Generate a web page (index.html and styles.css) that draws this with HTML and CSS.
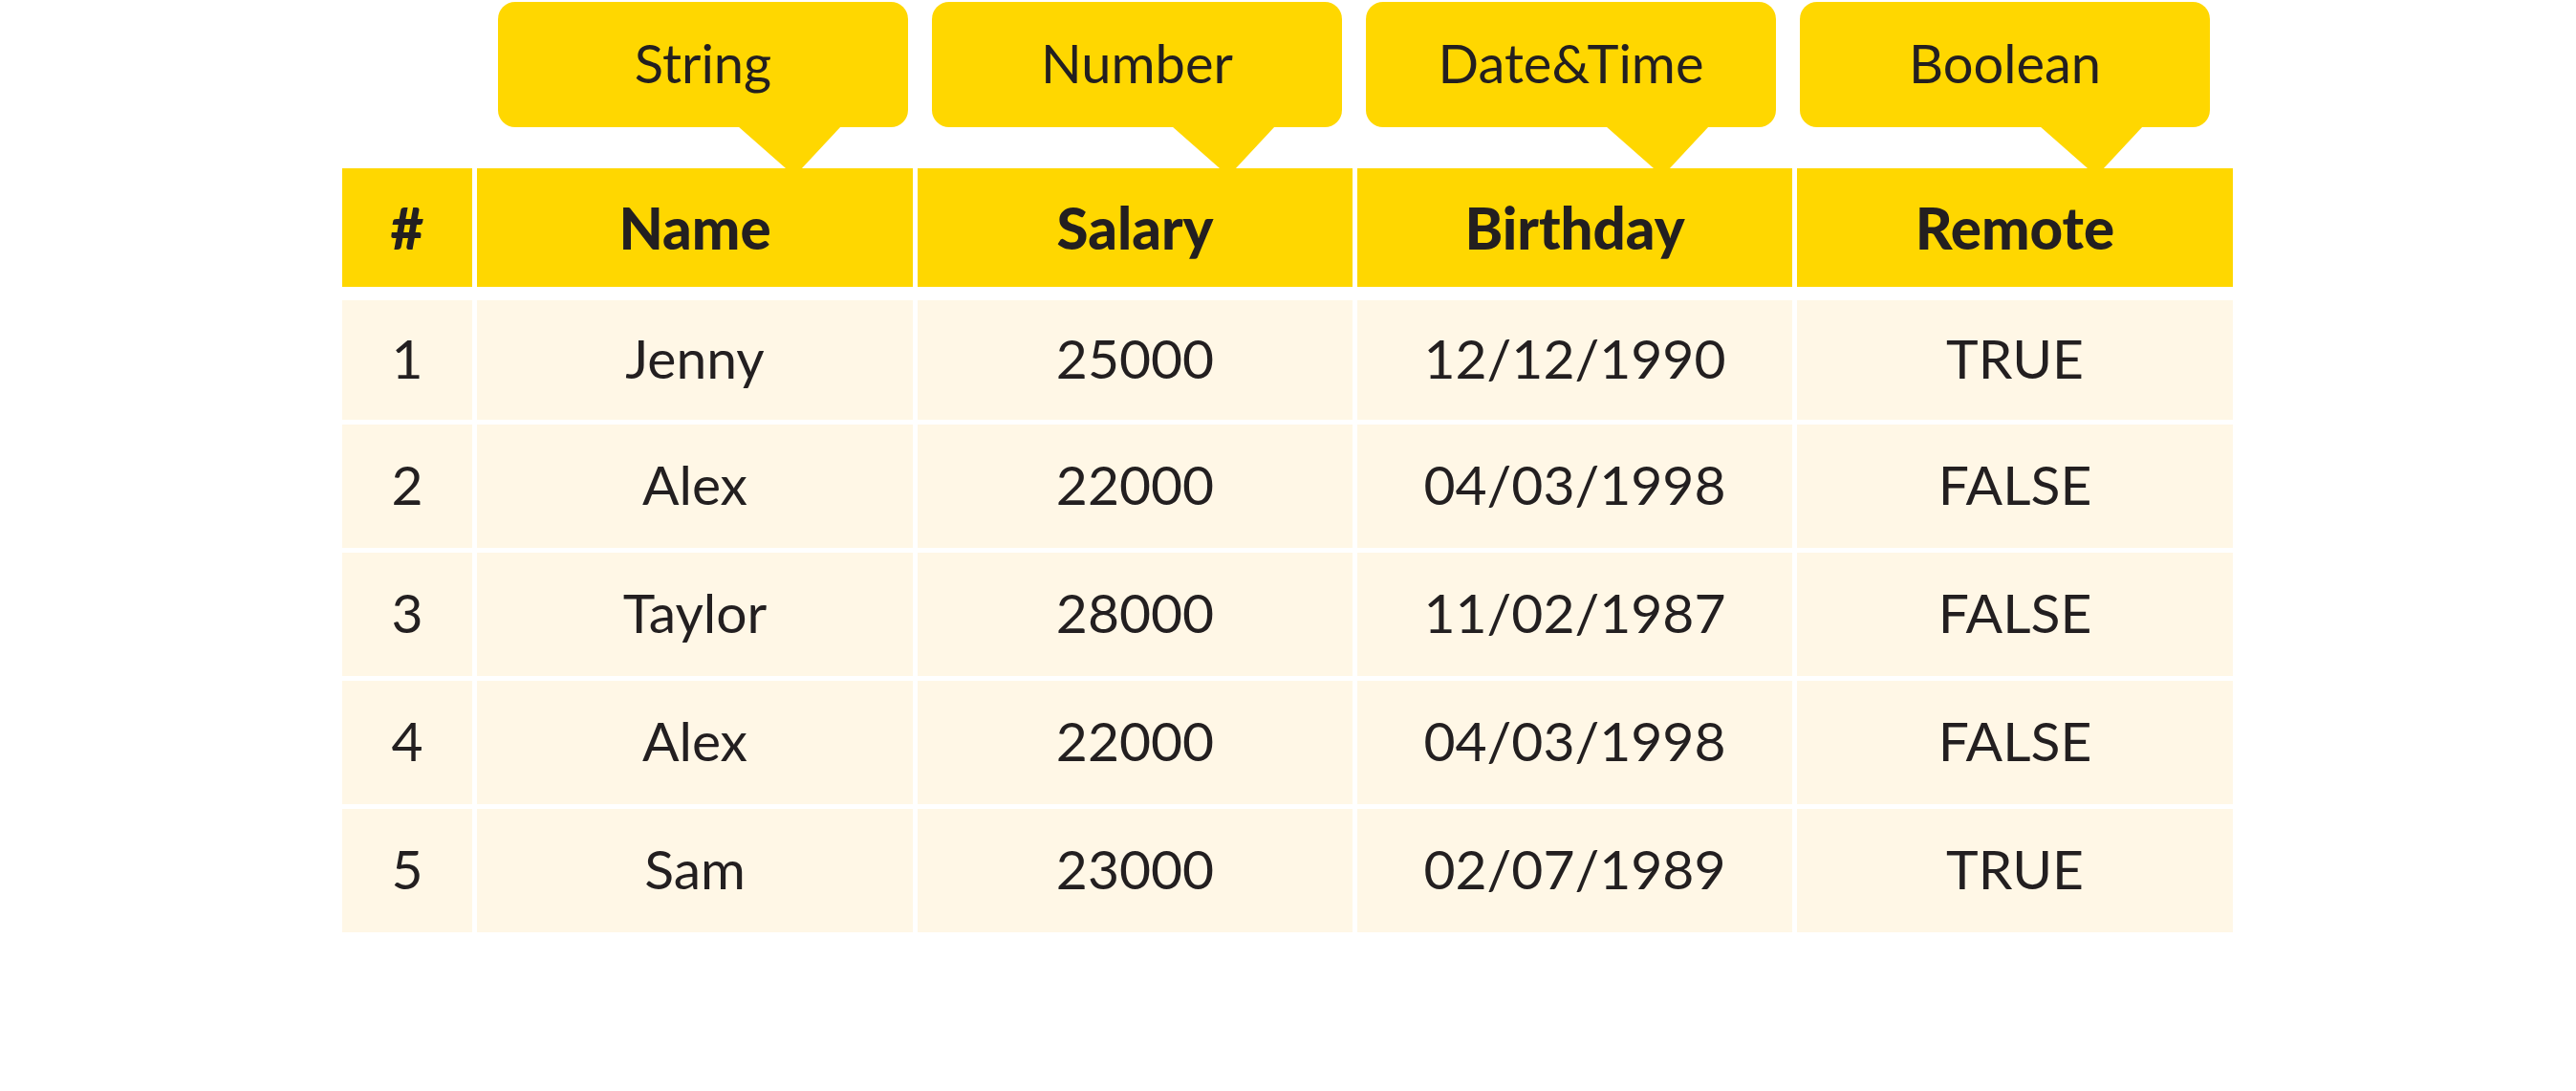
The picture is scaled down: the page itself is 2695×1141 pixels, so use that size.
FILE: index.html
```html
<!DOCTYPE html>
<html lang="en">
<head>
<meta charset="utf-8">
<title>Data types</title>
<link rel="stylesheet" href="styles.css">
</head>
<body>
<div class="page">
  <div class="bubbles">
    <div class="bubble">String</div>
    <div class="bubble">Number</div>
    <div class="bubble">Date&amp;Time</div>
    <div class="bubble">Boolean</div>
  </div>
  <div class="table">
    <div class="head">
      <div class="hcell">#</div>
      <div class="hcell">Name</div>
      <div class="hcell">Salary</div>
      <div class="hcell">Birthday</div>
      <div class="hcell">Remote</div>
    </div>
    <div class="body">
      <div class="row first">
        <div class="cell">1</div><div class="cell">Jenny</div><div class="cell">25000</div><div class="cell">12/12/1990</div><div class="cell">TRUE</div>
      </div>
      <div class="row">
        <div class="cell">2</div><div class="cell">Alex</div><div class="cell">22000</div><div class="cell">04/03/1998</div><div class="cell">FALSE</div>
      </div>
      <div class="row">
        <div class="cell">3</div><div class="cell">Taylor</div><div class="cell">28000</div><div class="cell">11/02/1987</div><div class="cell">FALSE</div>
      </div>
      <div class="row">
        <div class="cell">4</div><div class="cell">Alex</div><div class="cell">22000</div><div class="cell">04/03/1998</div><div class="cell">FALSE</div>
      </div>
      <div class="row">
        <div class="cell">5</div><div class="cell">Sam</div><div class="cell">23000</div><div class="cell">02/07/1989</div><div class="cell">TRUE</div>
      </div>
    </div>
  </div>
</div>
</body>
</html>
```

FILE: styles.css
```css
html, body {
  margin: 0;
  padding: 0;
  background: #ffffff;
}

body {
  font-family: Lato, "Noto Sans", sans-serif;
  color: #231f20;
}

.page {
  width: 1979px;
  margin: 0 auto;
  padding-top: 2px;
}

.bubbles {
  display: flex;
  gap: 25px;
  padding-left: 163px;
  height: 131px;
}

.bubble {
  position: relative;
  width: 429px;
  height: 131px;
  background: #ffd700;
  border-radius: 18px;
  display: flex;
  align-items: center;
  justify-content: center;
  font-size: 56px;
  font-weight: 400;
  padding-bottom: 4px;
  box-sizing: border-box;
}

.bubble::after {
  content: "";
  position: absolute;
  top: 130px;
  left: 251px;
  width: 108px;
  height: 44px;
  background: #ffd700;
  clip-path: polygon(0 0, 100% 0, 62% 100%, 46.3% 100%);
}

.table {
  margin-top: 43px;
}

.head,
.row {
  display: grid;
  grid-template-columns: 136px 456px 455px 455px 456px;
  column-gap: 5px;
}

.head {
  height: 124px;
}

.hcell {
  background: #ffd700;
  display: flex;
  align-items: center;
  justify-content: center;
  font-size: 60px;
  font-weight: 900;
}

.body {
  margin-top: 14px;
  display: flex;
  flex-direction: column;
  gap: 5px;
}

.row {
  height: 129px;
}

.row.first {
  height: 125px;
}

.cell {
  background: #fff7e6;
  display: flex;
  align-items: center;
  justify-content: center;
  font-size: 57px;
  font-weight: 400;
  padding-bottom: 6px;
  box-sizing: border-box;
}
```
